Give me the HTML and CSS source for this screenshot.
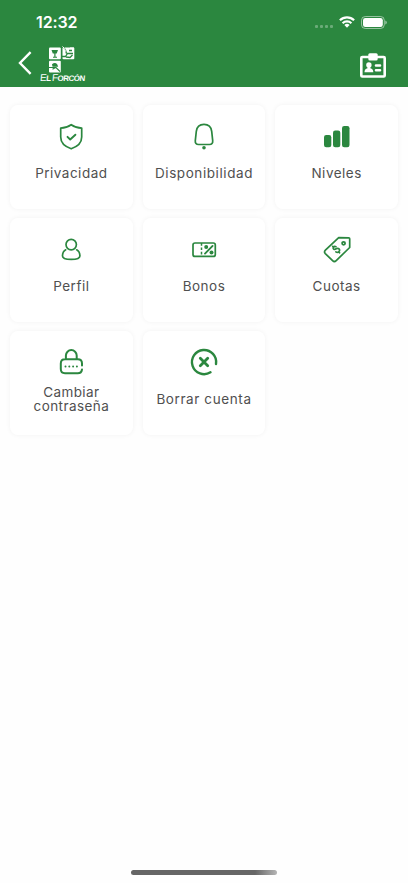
FILE: index.html
```html
<!DOCTYPE html>
<html lang="es">
<head>
<meta charset="utf-8">
<meta name="viewport" content="width=device-width, initial-scale=1">
<title>El Forcón</title>
<link rel="stylesheet" href="styles.css">
</head>
<body>
<div class="app">
  <header class="header">
    <div class="status">
      <span class="time">12:32</span>
      <div class="indicators">
        <span class="signal"><i></i><i></i><i></i><i></i></span>
        <svg class="wifi" width="16" height="12" viewBox="0 0 16 12"><g fill="none" stroke="#fff" stroke-width="2.2"><path d="M.9 4.2a10.2 10.2 0 0 1 14.2 0"/><path d="M3.6 7.2a6.4 6.4 0 0 1 8.8 0"/></g><path d="M5.4 9a3.9 3.9 0 0 1 5.2 0L8 11.8z" fill="#fff"/></svg>
        <svg width="26" height="13" viewBox="0 0 26 13"><rect x=".5" y=".5" width="22.8" height="12" rx="3.8" fill="none" stroke="#fff" stroke-opacity=".5"/><rect x="2" y="2" width="19.8" height="9" rx="2.3" fill="#fff"/><path d="M24.300 4.500q1.500.6 1.500 2t-1.500 2z" fill="#fff" fill-opacity=".55"/></svg>
      </div>
    </div>
    <div class="nav">
      <svg class="back" width="14" height="24" viewBox="0 0 14 24"><path d="M12.6 1.200 2 12l10.600 10.800" fill="none" stroke="#fff" stroke-width="2.400"/></svg>
      <div class="logo">
        <svg class="logo-mark" width="28" height="27" viewBox="0 0 28 27">
          <g fill="#fff"><rect x="1" y="1.500" width="11.800" height="11.800" rx="1"/><rect x="14.500" y="1.500" width="11.800" height="11.800" rx="1"/><rect x="1" y="14.800" width="11.800" height="11.800" rx="1"/></g>
          <path d="M3.500 4h6.500l-1.300 3.500H7.500v3.300H9v1H5v-1h1.300V7.500H4.800z" fill="#2b873f"/>
          <g fill="none" stroke="#2b873f"><path d="M13.500 10.500h4l2-3h5.500M18 11l4 .5 2.500-2.500M15.500 1l2 3 1 3.500M21 4.500h3" stroke-width="1.300"/><path d="M1 21.500h7l4 4M7.500 21.500l-3 1.800" stroke-width="1.100"/></g>
          <path d="M4 18.300q3-2.400 5.200 0l1 2.500H4.500z" fill="#2b873f"/><path d="M14.500.5l2 2 1 3M22 2h4" fill="none" stroke="#fff"/>
        </svg>
        <span class="logo-text"><b>E</b>L <b>F</b>ORCÓN</span>
      </div>
      <svg class="badge" width="28" height="26" viewBox="0 0 28 26">
        <rect x="2.300" y="4" width="23.400" height="19.500" rx="1" fill="none" stroke="#fff" stroke-width="2.600"/><rect x="9.300" y=".3" width="9.400" height="7.200" rx="1.500" fill="#fff"/>
        <circle cx="9.900" cy="12" r="2.700" fill="#fff"/><path d="M8.500 13h2.800v2.200q3 .5 3 4H5.500q0-3.500 3-4z" fill="#fff"/><path d="M17 12.500H21M17 17.200H21" stroke="#fff" stroke-width="2.600" stroke-linecap="round"/>
      </svg>
    </div>
  </header>
  <main class="grid">
    <a class="card"><svg class="icon" viewBox="0 0 32 32"><path d="M16.200 3.700q4.500 3.200 10.500 3.400v9q0 8.200-10.500 11.700-10.500-3.500-10.500-11.700v-9q6-.2 10.500-3.400z"/><path d="m12.500 15.800 2.700 2.700 5.200-4.800" stroke-width="1.900"/></svg><span class="label privacy">Privacidad</span></a>
    <a class="card"><svg class="icon" viewBox="0 0 32 32"><path d="M16 3.400c-4.500 0-7.200 3-7.700 7l-1 9.300q-.3 3.800 3.200 3.800h11q3.500 0 3.200-3.800l-1-9.300c-.5-4-3.200-7-7.700-7z"/><circle class="fill" cx="16" cy="26.800" r="1.800"/></svg><span class="label availability">Disponibilidad</span></a>
    <a class="card"><svg class="icon" viewBox="0 0 32 32"><g class="fill"><rect x="3" y="14" width="7.300" height="12.200" rx="2.200"/><rect x="12" y="9.500" width="7.300" height="16.700" rx="2.200"/><rect x="21" y="5" width="7.500" height="21.200" rx="2.200"/></g></svg><span class="label levels">Niveles</span></a>
    <a class="card"><svg class="icon" viewBox="0 0 32 32"><circle cx="16.200" cy="10.600" r="5.200"/><path d="M10.700 15.800C8.500 17 7.500 19.500 7.500 22q0 3.400 8.700 3.400t8.700-3.400c0-2.500-1-5-3.200-6.200"/></svg><span class="label profile">Perfil</span></a>
    <a class="card"><svg class="icon" viewBox="0 0 32 32"><rect x="5" y="9" width="22.300" height="13.400" rx="2"/><path d="M13.500 9v13" stroke-dasharray="2.700 1.700" stroke-width="1.500" stroke-linecap="butt"/><path d="m17 19.600 7.600-7.700" stroke-width="1.900"/><circle class="fill" cx="18.200" cy="13" r="2"/><circle class="fill" cx="23.500" cy="18.500" r="2"/></svg><span class="label vouchers">Bonos</span></a>
    <a class="card"><svg class="icon" viewBox="0 0 32 32"><path d="m17.700 3.600 10 .2q1 0 1 1v8.700L15.200 26.600q-1.800 1.800-3.600 0l-7.300-7q-1.600-1.700.1-3.400z"/><circle cx="22.600" cy="9.300" r="1.500" stroke-width="1.800"/><path d="M15 12.700q-1.700-.7-2.500.5-.8 1.300.4 2 .9.500 2.300-.4 1.700-1 2.800.1 1.400 1.600-.4 3-1.300 1-2.700-.1M12.600 13.300l-.9-.9M17.600 17.900l1 .9" stroke-width="1.700"/></svg><span class="label fees">Cuotas</span></a>
    <a class="card"><svg class="icon bold" viewBox="0 0 32 32"><path d="M10.900 12V8.500a5.400 5.400 0 0 1 10.800 0V12M27 18.500v-2q0-4.200-4.200-4.200H10q-4.200 0-4.200 4.200V22q0 4.200 4.200 4.200h12.800q3.700 0 4.200-3.700"/><path d="M10.500 19.500h.01M14.300 19.500h.01M18.100 19.500h.01M21.900 19.500h.01"/></svg><span class="label password">Cambiar<br>contraseña</span></a>
    <a class="card"><svg class="icon delete" viewBox="0 0 32 32"><path d="M28 17A12.100 12.100 0 1 0 22.500 25.300"/><path d="m12.300 11.300 7.400 7.400m0-7.400-7.400 7.400" stroke-width="2.800"/></svg><span class="label account">Borrar cuenta</span></a>
  </main>
  <div class="home-bar"></div>
</div>
</body>
</html>
```
FILE: styles.css
```css
* { box-sizing: border-box; }
body { margin: 0; background: #fefefe; font-family: Inter, "Liberation Sans", sans-serif; }
.app { height: 883px; display: flex; flex-direction: column; overflow: hidden; }
.header { height: 87px; flex: none; background: #2b873f; color: #fff; }
.status { height: 45px; display: flex; align-items: center; justify-content: space-between; padding: 0 21px 0 36px; }
.time { font-size: 16px; font-weight: 600; letter-spacing: -.1px; margin-top: -1px; }
.indicators { display: flex; align-items: center; margin-top: -1px; }
.signal { display: flex; gap: 1.7px; margin: 9px 6px 0 0; }
.signal i { width: 3.2px; height: 3.2px; border-radius: 1px; background: #fff; opacity: .3; }
.wifi { margin-right: 6px; }
.nav { height: 42px; display: flex; align-items: flex-start; padding: 0 21px 0 18px; }
.back { margin-top: 6px; }
.logo { display: flex; flex-direction: column; margin: 2px 0 0 8px; width: 46px; }
.logo-mark { margin: -1px 0 0 8px; }
.logo-text { font: 8px/10px "Liberation Sans", sans-serif; font-weight: 700; letter-spacing: -.55px; white-space: nowrap; transform: skewX(-5deg); }
.logo-text b { font-size: 10px; font-weight: 400; }
.badge { margin: 8px 0 0 auto; }
.grid { display: grid; grid-template-columns: repeat(3, 1fr); grid-auto-rows: 104px; gap: 9px 10px; padding: 18px 10px 0; }
.card { display: flex; flex-direction: column; align-items: center; padding-top: 16px; border-radius: 8px; background: #fff; box-shadow: 0 0 5px rgba(0, 0, 0, .05); }
.icon { width: 32px; height: 32px; flex: none; fill: none; stroke: #2b873f; stroke-width: 1.7; stroke-linecap: round; stroke-linejoin: round; }
.icon .fill { fill: #2b873f; stroke: none; }
.icon.bold { stroke-width: 2; }
.icon.delete { stroke-width: 2.4; }
.label { height: 39px; display: flex; align-items: center; text-align: center; color: #505050; font-size: 13.5px; line-height: 14px; white-space: nowrap; letter-spacing: .5px; }
.label.availability { letter-spacing: .58px; }
.label.account { letter-spacing: .6px; }
.label.password { letter-spacing: .42px; }
.home-bar { width: 146px; height: 5px; margin: auto auto 8px 131px; border-radius: 3px; background: linear-gradient(90deg, #666 0 85%, #b5b5b5); }
```
